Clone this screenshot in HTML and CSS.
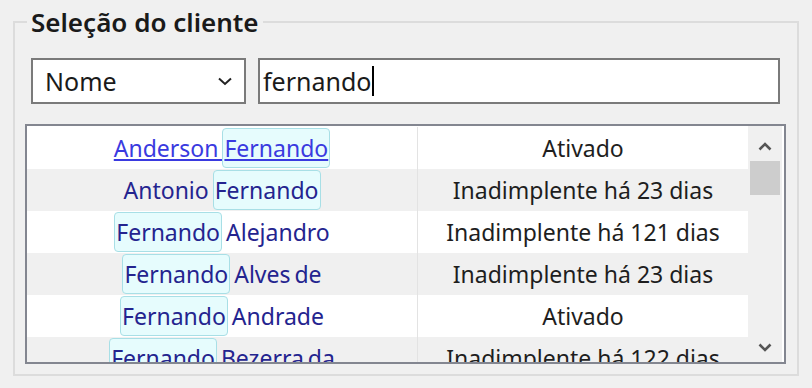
FILE: index.html
```
<!DOCTYPE html>
<html lang="pt">
<head>
  <meta charset="UTF-8" />
  <title>Seleção do cliente</title>
  <link rel="stylesheet" href="styles.css">
</head>
<body>
  <fieldset class="grupo">
    <legend>Seleção do cliente</legend>
    <div class="filtro">
      <div class="combo">
        <span>Nome</span>
        <svg width="14" height="9" viewBox="0 0 14 9"><path d="M1 1.5 L7 7 L13 1.5" fill="none" stroke="#222" stroke-width="2"/></svg>
      </div>
      <div class="busca">fernando<span class="cursor"></span></div>
    </div>

    <div class="lista">
      <div class="linhas">
        <div class="linha">
          <div class="nome link">Anderson <mark>Fernando</mark></div>
          <div class="status">Ativado</div>
        </div>
        <div class="linha">
          <div class="nome">Antonio <mark>Fernando</mark></div>
          <div class="status">Inadimplente há 23 dias</div>
        </div>
        <div class="linha">
          <div class="nome"><mark>Fernando</mark> Alejandro</div>
          <div class="status">Inadimplente há 121 dias</div>
        </div>
        <div class="linha">
          <div class="nome"><mark>Fernando</mark> Alves de</div>
          <div class="status">Inadimplente há 23 dias</div>
        </div>
        <div class="linha">
          <div class="nome"><mark>Fernando</mark> Andrade</div>
          <div class="status">Ativado</div>
        </div>
        <div class="linha">
          <div class="nome"><mark>Fernando</mark> Bezerra da</div>
          <div class="status">Inadimplente há 122 dias</div>
        </div>
      </div>
      <div class="rolagem">
        <svg width="14" height="9" viewBox="0 0 14 9"><path d="M1.5 7.5 L7 2 L12.5 7.5" fill="none" stroke="#555" stroke-width="2.6"/></svg>
        <div class="trilho"><div class="barra"></div></div>
        <svg width="14" height="9" viewBox="0 0 14 9"><path d="M1.5 1.5 L7 7 L12.5 1.5" fill="none" stroke="#555" stroke-width="2.6"/></svg>
      </div>
    </div>
  </fieldset>
</body>
</html>
```

FILE: styles.css
```
body {
  margin: 0;
  background-color: #f0f0f0;
  font-family: 'Noto Sans', 'Open Sans', sans-serif;
  color: #1a1a1a;
}
.grupo {
  margin: 7px 0 0 13px;
  padding: 0;
  width: 786px;
  height: 369px;
  box-sizing: border-box;
  border: 2px solid #dcdcdc;
}
.grupo legend {
  margin-left: 12px;
  padding: 0 4px;
  font-size: 26px;
  font-weight: 600;
  line-height: 30px;
  color: #1a1a1a;
}
.filtro {
  display: flex;
  gap: 12px;
  margin: 21px 0 0 16px;
}
.combo {
  width: 215px;
  height: 46px;
  box-sizing: border-box;
  border: 2px solid #7a7a7a;
  background: #fff;
  display: flex;
  align-items: center;
  justify-content: space-between;
  padding: 0 12px 0 12px;
  font-size: 25px;
}
.busca {
  width: 522px;
  height: 46px;
  box-sizing: border-box;
  border: 2px solid #7a7a7a;
  background: #fff;
  display: flex;
  align-items: center;
  padding-left: 3px;
  font-size: 25px;
}
.cursor {
  display: inline-block;
  width: 2px;
  height: 30px;
  background: #000;
  margin-left: 1px;
}
.lista {
  display: flex;
  margin: 20px 0 0 10px;
  width: 761px;
  height: 240px;
  box-sizing: border-box;
  border: 2px solid #838690;
  background: #fff;
  overflow: hidden;
}
.linhas {
  width: 721px;
  padding-top: 1px;
}
.linha {
  display: flex;
  height: 42px;
  align-items: center;
  font-size: 23px;
}
.linha:nth-child(even) {
  background-color: #f0f0f0;
}
.nome {
  width: 390px;
  height: 100%;
  display: flex;
  align-items: center;
  justify-content: center;
  border-right: 1px solid #e3e3e3;
  color: #24248f;
  white-space: pre;
  word-spacing: -2px;
}
.nome.link {
  color: #3a3ae0;
  text-decoration: underline;
}
.status {
  flex: 1;
  text-align: center;
  color: #1e1e1e;
}
mark {
  background: #e6fcfd;
  color: inherit;
  border: 1px solid #a8dfe6;
  border-radius: 4px;
  padding: 3px 1px;
}
.rolagem {
  width: 36px;
  background: #f0f0f0;
  display: flex;
  flex-direction: column;
  align-items: center;
  padding: 16px 0 10px;
  box-sizing: border-box;
  border-right: 2px solid #fff;
}
.trilho {
  flex: 1;
  width: 30px;
  padding-top: 10px;
}
.barra {
  height: 34px;
  background: #cdcdcd;
}
```
